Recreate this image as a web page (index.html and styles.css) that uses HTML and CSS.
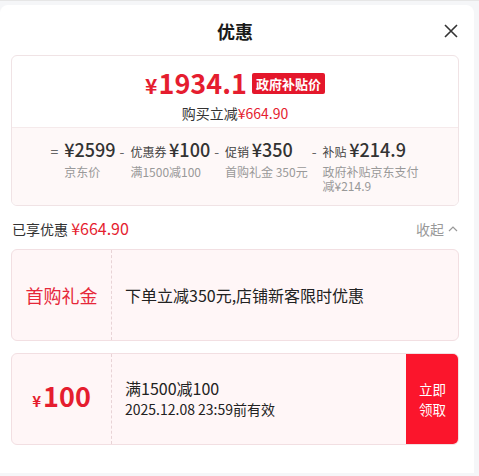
FILE: index.html
```html
<!DOCTYPE html>
<html lang="zh-CN">

<head>
    <meta charset="UTF-8">
    <meta name="viewport" content="width=device-width, initial-scale=1.0">
    <title>优惠</title>
    <link rel="stylesheet" href="styles.css">
</head>

<body>
    <section class="sheet">
        <!-- 标题 -->
        <header class="sheet-head">
            <span></span>
            <h3>优惠</h3>
            <button class="close" aria-label="关闭">
                <svg width="16" height="16" viewBox="0 0 16 16">
                    <path d="M2 2L14 14M14 2L2 14" stroke="#333" stroke-width="1.6" fill="none" />
                </svg>
            </button>
        </header>

        <!-- 到手价 -->
        <section class="price-card">
            <div class="price-top">
                <div class="price-line">
                    <span class="price"><i>¥</i>1934.1</span>
                    <span class="badge">政府补贴价</span>
                </div>
                <p class="save">购买立减<em>¥664.90</em></p>
            </div>
            <div class="price-calc">
                <div class="calc-item">
                    <span class="op">=</span>
                    <span class="calc-head"><b>¥2599</b></span>
                    <span class="calc-sub">京东价</span>
                </div>
                <div class="calc-item">
                    <span class="op">-</span>
                    <span class="calc-head">优惠券 <b>¥100</b></span>
                    <span class="calc-sub">满1500减100</span>
                </div>
                <div class="calc-item">
                    <span class="op">-</span>
                    <span class="calc-head">促销 <b>¥350</b></span>
                    <span class="calc-sub">首购礼金 350元</span>
                </div>
                <div class="calc-item">
                    <span class="op">-</span>
                    <span class="calc-head">补贴 <b>¥214.9</b></span>
                    <span class="calc-sub">政府补贴京东支付减¥214.9</span>
                </div>
            </div>
        </section>

        <!-- 已享优惠 -->
        <div class="summary">
            <span>已享优惠 <em>¥664.90</em></span>
            <span class="fold">收起
                <svg width="10" height="7" viewBox="0 0 10 7">
                    <polyline points="1,6 5,2 9,6" stroke="#999" stroke-width="1.2" fill="none" />
                </svg>
            </span>
        </div>

        <!-- 优惠券列表 -->
        <div class="coupon">
            <div class="coupon-left gift">首购礼金</div>
            <div class="coupon-main">
                <p class="coupon-title">下单立减350元,店铺新客限时优惠</p>
            </div>
        </div>
        <div class="coupon">
            <div class="coupon-left"><i>¥</i>100</div>
            <div class="coupon-main">
                <p class="coupon-title">满1500减100</p>
                <p class="coupon-date">2025.12.08 23:59前有效</p>
            </div>
            <button class="coupon-get">立即<br>领取</button>
        </div>
    </section>
</body>

</html>
```

FILE: styles.css
```css
body {
    margin: 0;
    padding-top: 4px;
    background: #f5f6f8;
    border-top: 1px solid #e6e6e6;
    font-family: "Noto Sans CJK SC", "Noto Sans", sans-serif;
    color: #333;
}

p {
    margin: 0;
}

em,
i {
    font-style: normal;
}

.sheet {
    width: 474px;
    box-sizing: border-box;
    padding: 0 15px 16px 11px;
    background: #fff;
    border-radius: 8px 8px 0 0;
}

.sheet-head {
    display: grid;
    grid-template-columns: 1fr auto 1fr;
    align-items: center;
    padding: 14px 0 12px;
}

.sheet-head h3 {
    margin: 0;
    font-size: 18px;
    line-height: 24px;
    color: #1a1a1a;
}

.close {
    justify-self: end;
    width: 16px;
    height: 16px;
    padding: 0;
    border: 0;
    background: none;
    display: flex;
}

/* 到手价卡片 */
.price-card {
    border: 1px solid #f0e3e5;
    border-radius: 6px;
    overflow: hidden;
}

.price-top {
    padding: 8px 0 4px;
    text-align: center;
}

.price-line {
    display: flex;
    justify-content: center;
    align-items: center;
    gap: 5px;
    height: 39px;
}

.price {
    color: #e51d2f;
    font-size: 27px;
    line-height: 39px;
    font-weight: 700;
}

.price i {
    font-size: 21px;
    margin-right: 1px;
}

.badge {
    background: #e4172b;
    color: #fff;
    font-size: 13px;
    font-weight: 700;
    line-height: 21px;
    padding: 0 4px;
    border-radius: 2px;
}

.save {
    font-size: 14px;
    line-height: 20px;
}

.save em {
    color: #e51d2f;
}

.price-calc {
    display: flex;
    justify-content: center;
    align-items: flex-start;
    gap: 4px;
    padding: 8px 0 12px;
    background: #fef8f8;
    border-top: 1px solid #f5eaeb;
}

.calc-item {
    display: grid;
    grid-template-columns: auto auto;
    column-gap: 6px;
}

.op {
    grid-row: 1;
    align-self: center;
    font-size: 14px;
    color: #666;
}

.calc-head {
    font-size: 12px;
    line-height: 26px;
    color: #444;
}

.calc-head b {
    font-size: 18px;
    font-weight: 500;
    color: #333;
}

.calc-sub {
    grid-column: 2;
    max-width: 97px;
    font-size: 12px;
    line-height: 14px;
    color: #999;
}

/* 已享优惠 */
.summary {
    display: flex;
    justify-content: space-between;
    align-items: center;
    margin: 11px 0 9px 1px;
    font-size: 14px;
    line-height: 22px;
}

.summary em {
    color: #e51d2f;
    font-size: 16px;
}

.fold {
    color: #999;
    display: flex;
    align-items: center;
    gap: 4px;
    margin-right: 1px;
}

/* 优惠券 */
.coupon {
    display: flex;
    height: 92px;
    box-sizing: border-box;
    margin-bottom: 12px;
    background: #fff6f7;
    border: 1px solid #f2dfe2;
    border-radius: 6px;
    overflow: hidden;
}

.coupon-left {
    width: 100px;
    flex: none;
    display: flex;
    justify-content: center;
    align-items: baseline;
    align-self: stretch;
    padding-top: 24px;
    box-sizing: border-box;
    border-right: 1px dashed #e8d3d6;
    color: #e51d2f;
    font-size: 27px;
    font-weight: 700;
    line-height: 36px;
}

.coupon-left i {
    font-size: 15px;
    margin-right: 2px;
}

.coupon-left.gift {
    font-size: 18px;
    font-weight: 400;
    color: #e6273a;
    padding-top: 0;
    align-items: center;
}

.coupon-main {
    flex: 1;
    display: flex;
    flex-direction: column;
    justify-content: center;
    padding-left: 13px;
}

.coupon-title {
    font-size: 16px;
    line-height: 21px;
    color: #222;
}

.coupon-date {
    font-size: 14px;
    line-height: 21px;
    color: #222;
}

.coupon-get {
    width: 53px;
    flex: none;
    margin: -1px -1px -1px 0;
    border: 0;
    border-radius: 0 6px 6px 0;
    background: #fb152c;
    color: #fff;
    font-family: inherit;
    font-size: 13.5px;
    line-height: 20px;
    padding: 0;
}
```
